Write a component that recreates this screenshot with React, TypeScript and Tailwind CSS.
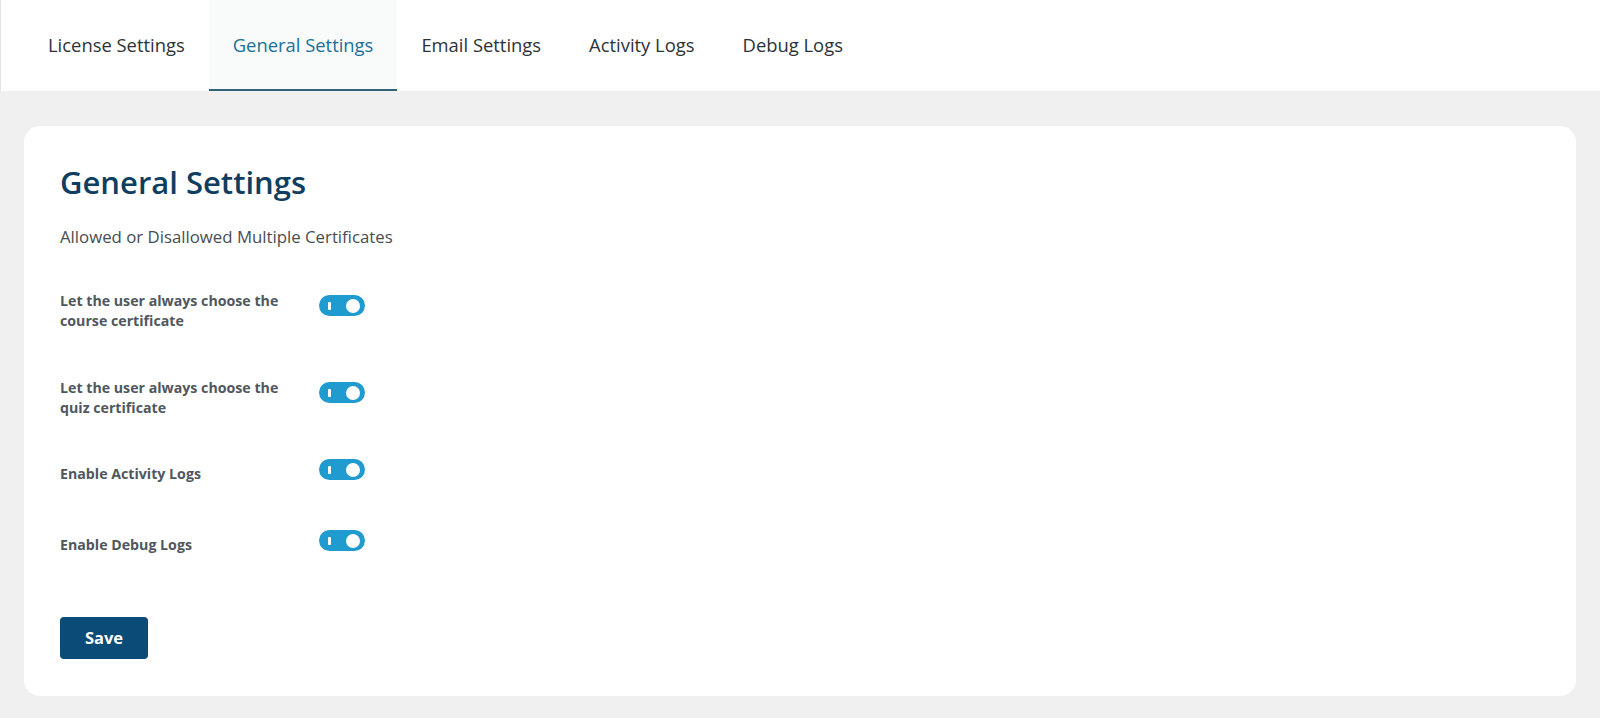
import React from "react";

const tabs = ["License Settings", "General Settings", "Email Settings", "Activity Logs", "Debug Logs"];

function Toggle() {
  return (
    <div className="relative h-[21px] w-[46px] rounded-full bg-[#1f9bd0]">
      <span className="absolute left-[9px] top-[6.5px] h-[8px] w-[3px] rounded-[1px] bg-white" />
      <span className="absolute right-[5px] top-[3.5px] h-[14px] w-[14px] rounded-full bg-white" />
    </div>
  );
}

const rows: { label: string; lines: number; cls: string }[] = [
  { label: "Let the user always choose the course certificate", lines: 2, cls: "mt-[42px]" },
  { label: "Let the user always choose the quiz certificate", lines: 2, cls: "mt-[47px]" },
  { label: "Enable Activity Logs", lines: 1, cls: "mt-[46px]" },
  { label: "Enable Debug Logs", lines: 1, cls: "mt-[51px]" },
];

export default function App() {
  return (
    <div className="min-h-screen bg-[#f0f0f1]" style={{ fontFamily: '"Open Sans", "Noto Sans", sans-serif' }}>
      <nav className="flex h-[91px] border-l border-[#e2e4e7] bg-white pl-[23px]">
        {tabs.map((t, i) => (
          <div
            key={t}
            className={
              i === 1
                ? "flex h-full items-center border-b-2 border-[#2e6378] bg-[#f9fafa] px-6 pt-[1px] text-[18.4px] text-[#1b6f98]"
                : "flex h-full items-center border-b-2 border-transparent px-6 pt-[1px] text-[18.4px] text-[#2c3338]"
            }
          >
            {t}
          </div>
        ))}
      </nav>
      <main className="px-6 pb-[23px] pt-[35px]">
        <div className="rounded-2xl bg-white px-[36px] pb-[37px] pt-[36px]">
          <h1 className="text-[31px] font-semibold leading-[40px] text-[#0f3e61]">General Settings</h1>
          <p className="mt-[23px] text-[16.8px] font-normal leading-[24px] text-[#474d53]">
            Allowed or Disallowed Multiple Certificates
          </p>
          {rows.map((r) => (
            <div key={r.label} className={`flex items-start ${r.cls}`}>
              <div className="w-[259px] pr-[30px] text-[14.2px] font-bold leading-[20px] text-[#50575e]">{r.label}</div>
              <div className={r.lines === 2 ? "mt-[4px]" : "-mt-[5px]"}>
                <Toggle />
              </div>
            </div>
          ))}
          <button className="mt-[62px] h-[42px] w-[88px] rounded-[4px] bg-[#0a4b78] text-[16.5px] font-bold text-white">
            Save
          </button>
        </div>
      </main>
    </div>
  );
}
